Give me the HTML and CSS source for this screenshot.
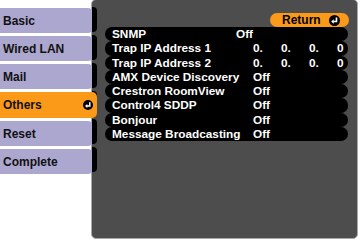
FILE: index.html
```html
<!DOCTYPE html>
<html>
<head>
<meta charset="utf-8">
<link rel="stylesheet" href="styles.css">
</head>
<body>
<div class="screen">
  <nav class="tabs">
    <div class="tab">Basic</div>
    <div class="tab">Wired LAN</div>
    <div class="tab">Mail</div>
    <div class="tab tab--active">Others
      <svg class="enter" width="10" height="10" viewBox="0 0 10 10"><circle cx="5" cy="5" r="5" fill="#000"/><path d="M6.8 2.3V5.9H4" fill="none" stroke="#fff" stroke-width="1.5"/><polygon points="2,5.9 4.3,3.9 4.3,7.9" fill="#fff"/></svg>
    </div>
    <div class="tab">Reset</div>
    <div class="tab">Complete</div>
  </nav>
  <section class="panel">
    <div class="notches">
      <div class="notch"></div>
      <div class="notch"></div>
      <div class="notch"></div>
      <div class="notch"></div>
      <div class="notch"></div>
      <div class="notch"></div>
    </div>
    <div class="main">
      <div class="return">Return
        <svg class="enter" width="11" height="11" viewBox="0 0 10 10"><circle cx="5" cy="5" r="5" fill="#000"/><path d="M6.8 2.3V5.9H4" fill="none" stroke="#fff" stroke-width="1.5"/><polygon points="2,5.9 4.3,3.9 4.3,7.9" fill="#fff"/></svg>
      </div>
      <div class="list">
        <div class="row"><span class="label label--short">SNMP</span><span>Off</span></div>
        <div class="row"><span class="label">Trap IP Address 1</span><span class="ip">0.</span><span class="ip">0.</span><span class="ip">0.</span><span>0</span></div>
        <div class="row"><span class="label">Trap IP Address 2</span><span class="ip">0.</span><span class="ip">0.</span><span class="ip">0.</span><span>0</span></div>
        <div class="row"><span class="label">AMX Device Discovery</span><span>Off</span></div>
        <div class="row"><span class="label">Crestron RoomView</span><span>Off</span></div>
        <div class="row"><span class="label">Control4 SDDP</span><span>Off</span></div>
        <div class="row"><span class="label">Bonjour</span><span>Off</span></div>
        <div class="row"><span class="label">Message Broadcasting</span><span>Off</span></div>
      </div>
    </div>
  </section>
</div>
</body>
</html>
```
FILE: styles.css
```css
html, body {
  margin: 0;
  padding: 0;
  background: #ffffff;
}
body {
  width: 360px;
  height: 241px;
  overflow: hidden;
  font-family: "Liberation Sans", Arial, sans-serif;
  font-weight: bold;
}
.screen {
  display: flex;
  width: 360px;
  height: 241px;
}
.tabs {
  width: 91px;
  flex: none;
  display: flex;
  flex-direction: column;
  gap: 3px;
  padding-top: 8px;
  box-sizing: border-box;
}
.tab {
  width: 92px;
  height: 25px;
  box-sizing: border-box;
  background: #aca7cf;
  border-radius: 0 4px 4px 0;
  padding-left: 3px;
  display: flex;
  align-items: center;
  font-size: 12px;
  color: #111;
  position: relative;
  z-index: 1;
}
.tab--active {
  width: 97px;
  height: 26px;
  background: #fb9a18;
  justify-content: space-between;
  padding-right: 4px;
  border-radius: 0 5px 5px 0;
}
.panel {
  width: 267px;
  height: 240px;
  margin-top: -1px;
  box-sizing: border-box;
  background: #4d4d4d;
  border: 1px solid #a9a9a9;
  border-radius: 5px;
  display: flex;
}
.notches {
  width: 5px;
  flex: none;
  display: flex;
  flex-direction: column;
  gap: 3px;
  padding-top: 7px;
}
.notch {
  height: 25px;
  background: #000;
  border-radius: 0 4px 4px 0;
}
.main {
  flex: 1;
  display: flex;
  flex-direction: column;
  padding: 13px 9px 0 8px;
}
.return {
  align-self: flex-end;
  margin-right: -1px;
  width: 79px;
  height: 14px;
  box-sizing: border-box;
  background: #fb9a18;
  border-radius: 7px;
  display: flex;
  align-items: center;
  padding-left: 12px;
  gap: 8px;
  font-size: 12px;
  color: #000;
}
.list {
  display: flex;
  flex-direction: column;
}
.row {
  height: 14.25px;
  line-height: 14.25px;
  background: #000;
  border-radius: 7px;
  padding-left: 7px;
  display: flex;
  color: #fff;
  font-size: 11.8px;
  white-space: nowrap;
}
.label {
  width: 141px;
  flex: none;
}
.label--short {
  width: 124px;
}
.ip {
  width: 28px;
  flex: none;
}
.enter {
  display: block;
  flex: none;
}
```
